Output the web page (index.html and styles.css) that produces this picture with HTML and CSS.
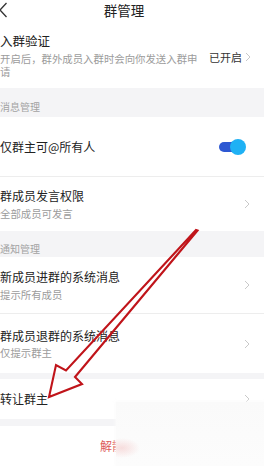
FILE: index.html
```html
<!DOCTYPE html>
<html lang="zh">
<head>
<meta charset="utf-8">
<link rel="stylesheet" href="styles.css">
</head>
<body>
<div class="page">
  <header class="topbar">
    <svg class="back" width="9" height="16" viewBox="0 0 9 16"><polyline points="7.5,1 1,8 7.5,15" fill="none" stroke="#333" stroke-width="1.3"/></svg>
    <span class="title">群管理</span>
  </header>

  <div class="row row-verify">
    <div class="main">
      <div class="t">入群验证</div>
      <div class="s s-wrap">开启后，群外成员入群时会向你发送入群申请</div>
    </div>
    <div class="side">
      <span class="state">已开启</span>
      <svg class="chev" width="6" height="10" viewBox="0 0 6 10"><polyline points="1,1 5,5 1,9" fill="none" stroke="#c9c9c9" stroke-width="1"/></svg>
    </div>
  </div>

  <div class="section sec1">消息管理</div>

  <div class="row row-toggle line">
    <div class="main"><div class="t">仅群主可@所有人</div></div>
    <div class="toggle"><span class="track"></span><span class="knob"></span></div>
  </div>

  <div class="row row-54">
    <div class="main">
      <div class="t">群成员发言权限</div>
      <div class="s">全部成员可发言</div>
    </div>
    <svg class="chev" width="6" height="10" viewBox="0 0 6 10"><polyline points="1,1 5,5 1,9" fill="none" stroke="#c9c9c9" stroke-width="1"/></svg>
  </div>

  <div class="section sec2">通知管理</div>

  <div class="row row-57 line">
    <div class="main">
      <div class="t">新成员进群的系统消息</div>
      <div class="s">提示所有成员</div>
    </div>
    <svg class="chev" width="6" height="10" viewBox="0 0 6 10"><polyline points="1,1 5,5 1,9" fill="none" stroke="#c9c9c9" stroke-width="1"/></svg>
  </div>

  <div class="row row-59">
    <div class="main">
      <div class="t">群成员退群的系统消息</div>
      <div class="s">仅提示群主</div>
    </div>
    <svg class="chev" width="6" height="10" viewBox="0 0 6 10"><polyline points="1,1 5,5 1,9" fill="none" stroke="#c9c9c9" stroke-width="1"/></svg>
  </div>

  <div class="gap gap6"></div>

  <div class="row row-40">
    <div class="main"><div class="t">转让群主</div></div>
    <svg class="chev" width="6" height="10" viewBox="0 0 6 10"><polyline points="1,1 5,5 1,9" fill="none" stroke="#c9c9c9" stroke-width="1"/></svg>
  </div>

  <div class="gap gap7"></div>

  <div class="danger">解散群聊</div>

  <div class="veil"></div>

  <svg class="arrow" width="264" height="466" viewBox="0 0 264 466">
    <polygon points="197.5,230.5 75,377 82,384 49,397 56,365 66,370.5 196,230" fill="none" stroke="#c0141a" stroke-width="2.1" stroke-linejoin="miter"/>
  </svg>
</div>
</body>
</html>
```

FILE: styles.css
```css
* { box-sizing: border-box; }
html, body { margin: 0; padding: 0; background: #fff; }
body {
  font-family: "Noto Sans CJK SC", "Noto Sans", sans-serif;
  color: #222;
  width: 264px;
  height: 466px;
  overflow: hidden;
}
.page { position: relative; width: 264px; height: 466px; overflow: hidden; }

.topbar {
  height: 22px;
  display: flex;
  align-items: center;
  justify-content: center;
  padding-right: 16px;
  position: relative;
}
.back { position: absolute; left: -1px; top: 2px; }
.title { font-size: 13.5px; line-height: 18px; color: #222; margin-top: -2px; }

.row {
  display: flex;
  align-items: center;
  padding: 0 14px 0 0;
  background: #fff;
}
.row.line { border-bottom: 1px solid #ededed; }
.main { flex: 1; min-width: 0; display: flex; flex-direction: column; gap: 2.5px; }
.t { font-size: 12px; line-height: 16px; color: #222; }
.s { font-size: 10.4px; line-height: 13px; color: #9c9c9c; }
.s-wrap { width: 200px; }

.row-verify { height: 66px; padding-top: 1px; }
.row-verify .main { gap: 3px; }
.row-verify .t { font-size: 12.5px; }
.side { display: flex; align-items: center; gap: 3px; margin-right: -1px; margin-top: 3px; }
.state { font-size: 11px; line-height: 14px; color: #333; }

.section {
  background: #f4f4f6;
  font-size: 10px;
  line-height: 14px;
  color: #a3a3a3;
}
.sec1 { height: 29px; padding-top: 12px; }
.sec2 { height: 26px; padding-top: 11px; }

.row-toggle { height: 60px; }
.toggle { position: relative; width: 27px; height: 16px; margin-right: 4px; }
.track {
  position: absolute; left: 0; top: 3px;
  width: 20px; height: 10px; border-radius: 5px;
  background: #2d58d2;
}
.knob {
  position: absolute; right: 0; top: 0;
  width: 16px; height: 16px; border-radius: 50%;
  background: #1fb1f4;
}

.row-54 { height: 54px; }
.row-57 { height: 57px; }
.row-59 { height: 59px; }
.row-40 { height: 40px; }
.chev { display: block; flex: none; }

.gap { background: #f4f4f6; }
.gap6 { height: 6px; }
.gap7 { height: 7px; }

.danger {
  height: 38px;
  display: flex;
  align-items: center;
  justify-content: center;
  padding-right: 16px;
  font-size: 12px;
  color: #dd5a5a;
}

.veil {
  position: absolute;
  left: 116px;
  top: 402px;
  width: 148px;
  height: 64px;
  background:
    radial-gradient(ellipse 18px 10px at 6px 46px, rgba(235, 150, 150, 0.3), rgba(255,255,255,0)),
    linear-gradient(180deg, #fafafa 0%, #fcfcfc 100%);
  box-shadow: 0 0 3px 1px rgba(252, 252, 252, 0.9);
}

.arrow { position: absolute; left: 0; top: 0; pointer-events: none; }
```
